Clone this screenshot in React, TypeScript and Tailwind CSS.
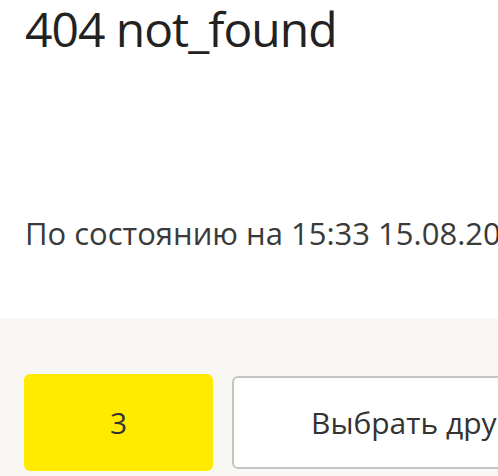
export default function App() {
  return (
    <div
      className="w-[498px] h-[476px] overflow-hidden bg-white text-[#333]"
      style={{ fontFamily: '"Open Sans", "Noto Sans", sans-serif' }}
    >
      <section className="h-[318px] px-[25px] pt-[1px]">
        <h1 className="text-[48px] leading-[56px] tracking-[-1px] text-[#222] whitespace-nowrap">404 not_found</h1>
        <p className="mt-[156px] text-[31px] leading-[40px] whitespace-nowrap text-[#3a3a3a]">
          По состоянию на 15:33 15.08.2023
        </p>
      </section>

      <section className="h-[158px] bg-[#f8f7f4] px-[24px] pt-[56px]">
        <div className="flex gap-[19px] items-center">
          <button className="w-[189px] h-[97px] shrink-0 rounded-[6px] bg-[#ffea00] text-[30px] text-[#333]">
            3
          </button>
          <button className="w-[320px] h-[93px] shrink-0 rounded-[6px] border-2 border-[#c4c4c4] bg-white text-left pl-[77px] text-[30px] text-[#333] whitespace-nowrap">
            Выбрать другой вариант
          </button>
        </div>
      </section>
    </div>
  );
}
